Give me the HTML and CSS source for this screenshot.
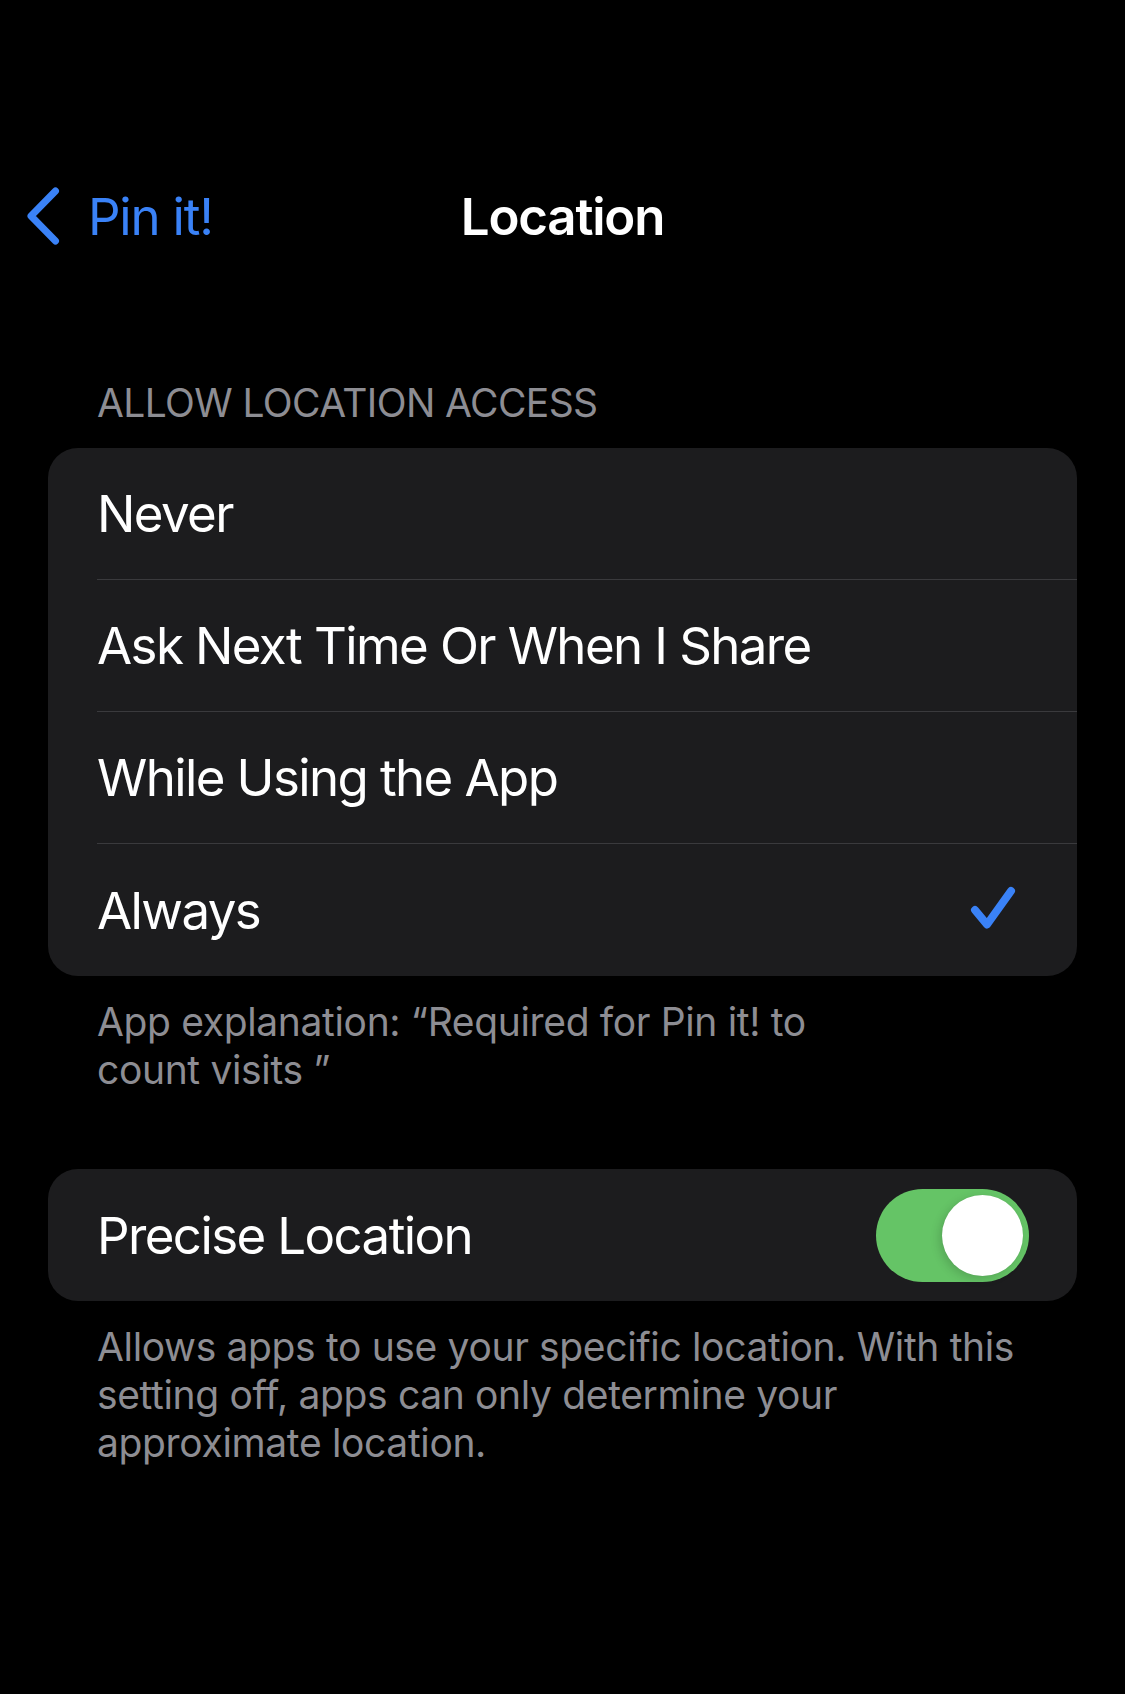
FILE: index.html
```html
<!DOCTYPE html>
<html lang="en">
<head>
<meta charset="utf-8">
<title>Location</title>
<link rel="stylesheet" href="styles.css">
</head>
<body>
<div class="screen">
  <div class="status"></div>
  <nav class="nav">
    <a class="back">
      <svg class="chev" width="34" height="58" viewBox="0 0 34 58"><path d="M29.5 4 L5 29 L29.5 54" fill="none" stroke="#3A82F7" stroke-width="7" stroke-linecap="round" stroke-linejoin="round"/></svg>
      <span class="back-label">Pin it!</span>
    </a>
    <div class="title">Location</div>
    <div class="spacer"></div>
  </nav>

  <section class="section first">
    <div class="header">ALLOW LOCATION ACCESS</div>
    <div class="card">
      <div class="row"><span class="label">Never</span></div>
      <div class="row"><span class="label">Ask Next Time Or When I Share</span></div>
      <div class="row"><span class="label">While Using the App</span></div>
      <div class="row"><span class="label">Always</span>
        <svg class="check" width="48" height="48" viewBox="0 0 48 48"><path d="M5 24 L17 38.5 L41 5" fill="none" stroke="#3A82F7" stroke-width="8" stroke-linecap="round" stroke-linejoin="round"/></svg>
      </div>
    </div>
    <div class="footer">App explanation: “Required for Pin it! to<br>count visits ”</div>
  </section>

  <section class="section second">
    <div class="card">
      <div class="row"><span class="label">Precise Location</span>
        <div class="toggle"><div class="knob"></div></div>
      </div>
    </div>
    <div class="footer">Allows apps to use your specific location. With this<br>setting off, apps can only determine your<br>approximate location.</div>
  </section>
</div>
</body>
</html>
```
FILE: styles.css
```css
* { box-sizing: border-box; }
html, body { margin: 0; padding: 0; background: #000; }
body {
  width: 1125px;
  height: 1694px;
  overflow: hidden;
  font-family: Inter, "Liberation Sans", sans-serif;
  color: #fff;
  -webkit-font-smoothing: antialiased;
}
.screen { display: flex; flex-direction: column; }
.status { height: 150px; }
.nav {
  height: 132px;
  display: grid;
  grid-template-columns: 1fr auto 1fr;
  align-items: center;
}
.back {
  display: flex;
  align-items: center;
  padding-left: 26px;
  color: #3A82F7;
  font-size: 51px;
  letter-spacing: -1.2px;
}
.chev { display: block; margin-right: 28px; margin-top: -1px; }
.title {
  font-size: 51px;
  font-weight: 600;
  letter-spacing: -1.2px;
}
.section { display: flex; flex-direction: column; }
.first { margin-top: 97px; }
.second { margin-top: 75px; }
.header {
  padding-left: 97px;
  font-size: 39px;
  line-height: 48px;
  color: #8D8D93;
  letter-spacing: -0.6px;
  margin-bottom: 21px;
}
.card {
  margin: 0 48px;
  background: #1C1C1E;
  border-radius: 30px;
  overflow: hidden;
}
.row {
  height: 132px;
  margin-left: 49px;
  padding-right: 48px;
  display: flex;
  align-items: center;
  justify-content: space-between;
  border-bottom: 1.5px solid #3A3A3D;
}
.row:last-child { border-bottom: none; }
.label {
  font-size: 51px;
  letter-spacing: -1.6px;
}
.check { display: block; margin-right: 11px; }
.toggle {
  width: 153px;
  height: 93px;
  border-radius: 47px;
  background: #65C466;
  display: flex;
  align-items: center;
  justify-content: flex-end;
  padding-right: 6px;
}
.knob {
  width: 81px;
  height: 81px;
  border-radius: 50%;
  background: #fff;
  box-shadow: -3px 3px 10px rgba(0,0,0,0.15), 0 0 1px rgba(0,0,0,0.1);
}
.footer {
  padding: 22px 48px 0 97px;
  font-size: 39px;
  line-height: 48px;
  color: #8D8D93;
  letter-spacing: -0.35px;
  white-space: nowrap;
}
```
